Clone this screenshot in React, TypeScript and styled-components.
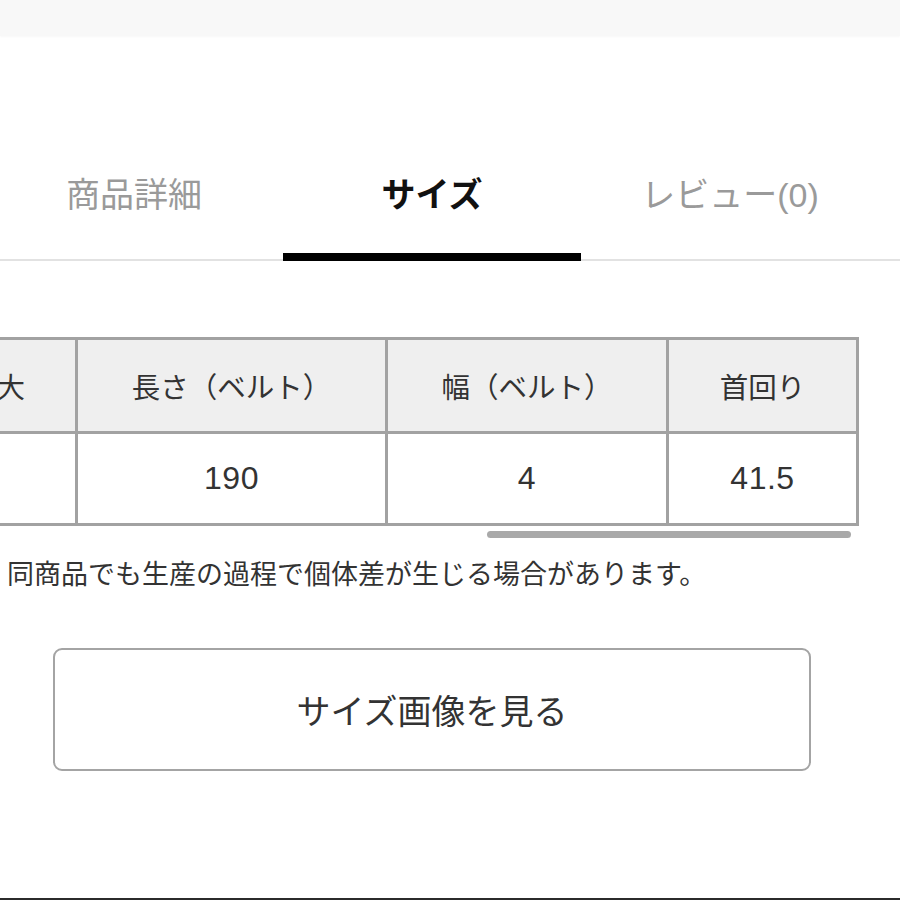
import styled, { createGlobalStyle } from "styled-components";

const GlobalStyle = createGlobalStyle`
  html, body {
    margin: 0;
    padding: 0;
    background: #ffffff;
  }
  body {
    font-family: "Liberation Sans", "Noto Sans CJK JP", sans-serif;
  }
`;

const Page = styled.div`
  width: 900px;
  height: 900px;
  box-sizing: border-box;
  border-bottom: 2px solid #2b2b2b;
  overflow: hidden;
  display: flex;
  flex-direction: column;
`;

const TopBar = styled.div`
  height: 36px;
  background: #f8f8f8;
  box-shadow: 0 1px 2px rgba(0, 0, 0, 0.03);
`;

const TabNav = styled.nav`
  display: flex;
  margin-top: 118px;
  margin-left: -15px;
  width: 915px;
  box-shadow: inset 0 -2px 0 #e2e2e2;
`;

const Tab = styled.div<{ $active?: boolean }>`
  width: 298px;
  height: 107px;
  box-sizing: border-box;
  padding-top: 21px;
  text-align: center;
  font-size: 34px;
  line-height: 40px;
  font-weight: ${(p) => (p.$active ? 700 : 400)};
  color: ${(p) => (p.$active ? "#111111" : "#9a9a9a")};
  border-bottom: 8px solid ${(p) => (p.$active ? "#000000" : "transparent")};
`;

const TableScroller = styled.div`
  position: relative;
  margin-top: 76px;
  width: 900px;
  overflow: hidden;
  padding-bottom: 16px;
`;

const SizeTable = styled.table`
  table-layout: fixed;
  border-collapse: collapse;
  width: 927px;
  margin-left: -71px;
  color: #333333;
`;

const HeadCell = styled.th<{ $edge?: boolean }>`
  height: 91px;
  padding: ${(p) => (p.$edge ? "0 50px 0 0" : "0")};
  border: 3px solid #a2a2a2;
  background: #efefef;
  font-size: 28.5px;
  font-weight: 400;
  text-align: ${(p) => (p.$edge ? "right" : "center")};
  white-space: nowrap;
`;

const BodyCell = styled.td`
  height: 89px;
  padding: 0;
  border: 3px solid #a2a2a2;
  background: #ffffff;
  font-size: 32px;
  text-align: center;
  letter-spacing: 0.5px;
`;

const ScrollThumb = styled.div`
  position: absolute;
  left: 487px;
  bottom: 4px;
  width: 364px;
  height: 7px;
  border-radius: 4px;
  background: #a9a9a9;
`;

const Content = styled.div`
  width: 864px;
  display: flex;
  flex-direction: column;
`;

const Note = styled.p`
  margin: 15px 0 0;
  padding-left: 7px;
  font-size: 27px;
  line-height: 36px;
  color: #333333;
  white-space: nowrap;
`;

const ImageButton = styled.button`
  margin: 55px auto 0;
  width: 758px;
  height: 123px;
  box-sizing: border-box;
  border: 2px solid #a4a4a4;
  border-radius: 9px;
  background: #ffffff;
  font-family: inherit;
  font-size: 34px;
  color: #333333;
  cursor: pointer;
`;

const headers = ["大", "長さ（ベルト）", "幅（ベルト）", "首回り"];
const values = ["", "190", "4", "41.5"];
const widths = [146, 310, 281, 190];

export default function App() {
  return (
    <>
      <GlobalStyle />
      <Page>
        <TopBar />
        <TabNav>
          <Tab>商品詳細</Tab>
          <Tab $active>サイズ</Tab>
          <Tab>レビュー(0)</Tab>
        </TabNav>
        <TableScroller>
          <SizeTable>
            <colgroup>
              {widths.map((w, i) => (
                <col key={i} style={{ width: w }} />
              ))}
            </colgroup>
            <thead>
              <tr>
                {headers.map((h, i) => (
                  <HeadCell key={h} $edge={i === 0}>
                    {h}
                  </HeadCell>
                ))}
              </tr>
            </thead>
            <tbody>
              <tr>
                {values.map((v, i) => (
                  <BodyCell key={i}>{v}</BodyCell>
                ))}
              </tr>
            </tbody>
          </SizeTable>
          <ScrollThumb />
        </TableScroller>
        <Content>
          <Note>同商品でも生産の過程で個体差が生じる場合があります。</Note>
          <ImageButton>サイズ画像を見る</ImageButton>
        </Content>
      </Page>
    </>
  );
}
